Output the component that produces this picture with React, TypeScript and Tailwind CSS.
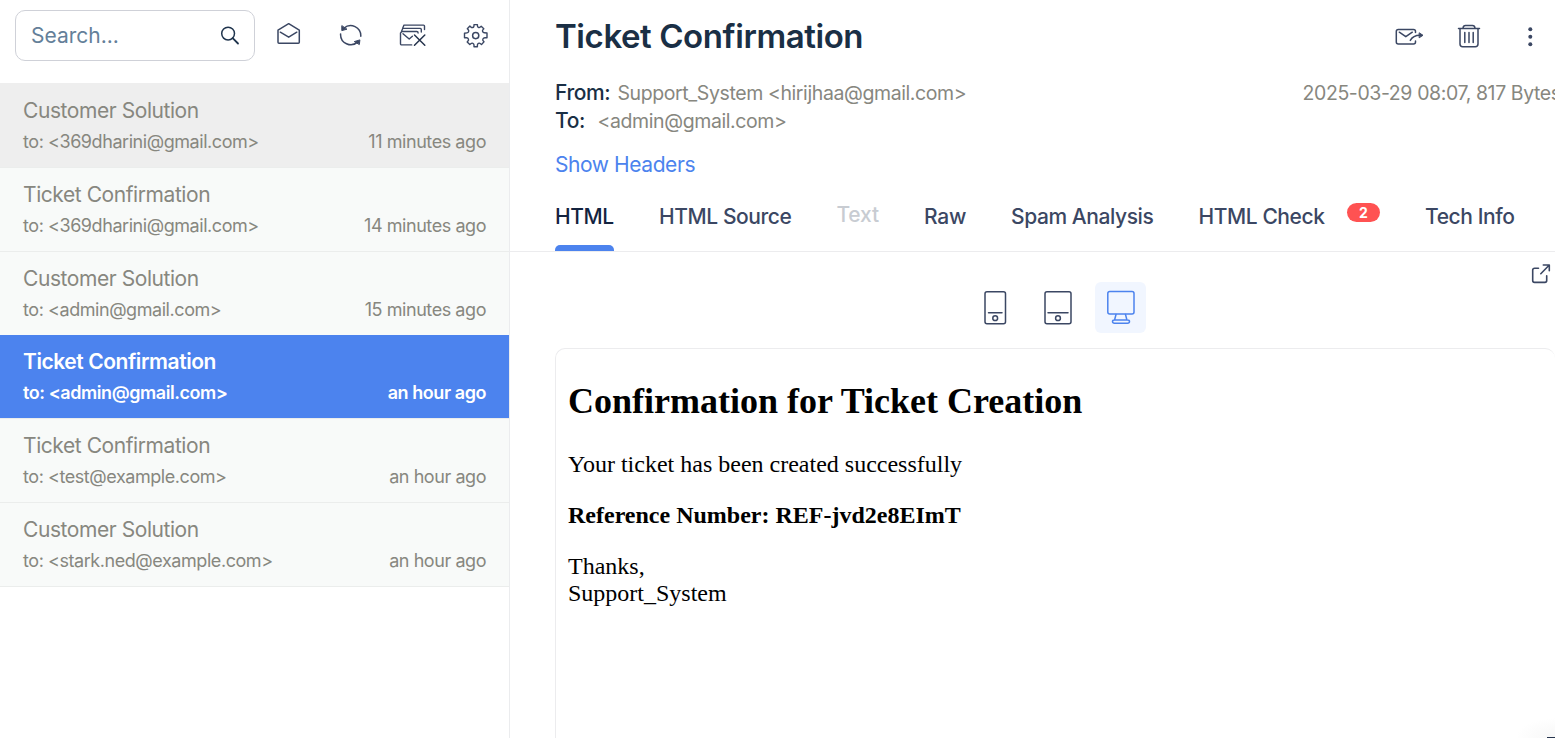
import React from "react";

type Mail = { subject: string; to: string; time: string; tone: "hover" | "normal" | "active" };

const mails: Mail[] = [
  { subject: "Customer Solution", to: "<369dharini@gmail.com>", time: "11 minutes ago", tone: "hover" },
  { subject: "Ticket Confirmation", to: "<369dharini@gmail.com>", time: "14 minutes ago", tone: "normal" },
  { subject: "Customer Solution", to: "<admin@gmail.com>", time: "15 minutes ago", tone: "normal" },
  { subject: "Ticket Confirmation", to: "<admin@gmail.com>", time: "an hour ago", tone: "active" },
  { subject: "Ticket Confirmation", to: "<test@example.com>", time: "an hour ago", tone: "normal" },
  { subject: "Customer Solution", to: "<stark.ned@example.com>", time: "an hour ago", tone: "normal" },
];

const tones = {
  hover: "bg-[#eeeeee] border-[#eeeeee] text-[#87877f] pt-[11px]",
  normal: "bg-[#f8faf9] border-[#ebedec] text-[#87877f] pt-[11px]",
  active: "bg-[#4c83ee] border-[#4c83ee] text-white font-semibold pt-[10px]",
};

function Icon({ w, h, className = "", children }: { w: number; h: number; className?: string; children: React.ReactNode }) {
  return (
    <svg width={w} height={h} viewBox={`0 0 ${w} ${h}`} fill="none" stroke="currentColor" strokeWidth="1.5" strokeLinecap="round" strokeLinejoin="round" className={`shrink-0 ${className}`}>
      {children}
    </svg>
  );
}

function Toolbar() {
  return (
    <div className="flex h-[83.25px] shrink-0 items-start pl-[15px] pt-[10px] text-[#3b4763]">
      <div className="flex h-[51px] w-[240px] items-center justify-between rounded-[10px] border border-[#cfd1d8] pl-[15px] pr-[14px]">
        <span className="text-[21px] leading-[30px] text-[#647f99]">Search...</span>
        <Icon w={20} h={20} className="text-[#1f344d]">
          <circle cx="8.1" cy="7.6" r="6.4" />
          <path d="M12.7 12.2 18 17.5" strokeWidth="1.8" />
        </Icon>
      </div>
      <Icon w={24} h={24} className="ml-[22px] mt-[12px]">
        <path d="M1 8.2 11.7 1.7 22.3 8.2V20.3q0 1-1 1H2q-1 0-1-1z" />
        <path d="M3.3 10.2 11.7 15.2l8.1-5" />
      </Icon>
      <Icon w={24} h={24} className="ml-[38px] mt-[12.5px]">
        <path d="M5 5.1A10.2 10.2 0 0 1 21.8 13.2M18.8 18.9A10.2 10.2 0 0 1 1.6 10.9" />
        <path d="M2.8 3 2.8 7.6 7.6 6.3z M20.4 21.2 20.9 16.9 15.6 18.5z" fill="currentColor" strokeWidth="1" />
      </Icon>
      <Icon w={28} h={24} className="ml-[36px] mt-[12.5px]">
        <g strokeWidth="1.4">
          <path d="M3.7 5.2 5 2.1H24.5q1 0 1 1V6.5" />
          <path d="M2.5 8.4 3.7 5.4H21.3q1 0 1 1V9" />
          <path d="M12.7 21.9H2.7q-1.2 0-1.2-1.2V9.9L3 8.5H17.8q1.3 0 1.3 1.6" />
          <path d="M4 10.7 10.2 16 13.4 13.2" />
        </g>
        <path d="M15.5 12 25.8 22.2M25.8 12 15.5 22.2" stroke="#26344d" />
      </Icon>
      <Icon w={26} h={26} className="ml-[36px] mt-[12.5px]">
        <path d="M10.3 4.4Q11 3.8 11 2.5V1.6H14.4V2.5Q14.4 3.8 15.3 4.3 16.4 4.8 17.3 4L18.2 3.2 20.8 5.7 20 6.6Q19.2 7.6 19.6 8.6 20.1 9.8 21.3 9.8L24 10V14.7H21.9Q20.5 14.8 19.9 16 19.4 17.2 20.3 18.1L21 18.8 18.5 21.6 17.5 20.7Q16.5 19.8 15.4 20.3 14.4 20.8 14.4 22V23.7H11V22Q11 20.8 9.9 20.3 8.8 19.8 7.8 20.7L6.8 21.6 4.2 18.9 5 18Q5.9 17 5.4 16 5 14.7 3.6 14.7H1.5V10.2L4 9.9Q5.2 9.8 5.6 8.6 6 7.5 5.1 6.5L4.3 5.7 6.9 3.1 7.8 3.9Q8.9 4.9 10.3 4.4Z" strokeWidth="1.4" />
        <circle cx="12.7" cy="12.6" r="3.1" />
      </Icon>
    </div>
  );
}

function MailRow({ mail }: { mail: Mail }) {
  return (
    <div className={`h-[83.75px] shrink-0 border-t px-[23px] ${tones[mail.tone]}`}>
      <div className="text-[21px] leading-[31px] tracking-[-0.43px]">{mail.subject}</div>
      <div className="flex justify-between text-[18px] leading-[31px] tracking-[-0.44px]">
        <span>to: {mail.to}</span>
        <span>{mail.time}</span>
      </div>
    </div>
  );
}

function Tabs() {
  return (
    <nav className="flex h-[60px] shrink-0 items-stretch border-b border-[#ececee] pl-[45px] text-[21px] font-medium leading-[50px] tracking-[-0.42px] text-[#3b4763]">
      <div className="flex w-[59px] flex-col justify-between text-[#13233f]">
        <span>HTML</span>
        <span className="h-[6px] rounded-t-[5px] bg-[#4c83ee]" />
      </div>
      <span className="ml-[45px] w-[177.5px]">HTML Source</span>
      <span className="w-[87.5px] leading-[46px] tracking-[-0.2px] text-[#c8ccd2]">Text</span>
      <span className="w-[87px] tracking-[-0.2px]">Raw</span>
      <span className="w-[187.5px]">Spam Analysis</span>
      <span className="w-[148.5px]">HTML Check</span>
      <span className="mt-[11px] flex h-[19px] w-[33px] items-center justify-center rounded-full bg-[#ff5252] text-[14px] font-bold leading-[19px] tracking-normal text-white">2</span>
      <span className="ml-[45px] whitespace-nowrap">Tech Info</span>
    </nav>
  );
}

function Header() {
  return (
    <header className="flex h-[192px] shrink-0 flex-col pl-[45px]">
      <div className="flex h-[73px] items-center justify-between text-[#3b4763]">
        <h1 className="-mt-[2px] text-[33px] font-semibold leading-[48px] tracking-[-0.42px] text-[#1a2f45]">Ticket Confirmation</h1>
        <div className="flex items-center pr-[20px]">
          <Icon w={30} h={22}>
            <path d="M20.5 6.5V5.5q0-2-2-2H3.3q-2 0-2 2V16q0 2 2 2H18.5q2 0 2-2V15" />
            <path d="M4.3 6.2 10.8 10.7 17.3 6.2" />
            <path d="M15.3 14.4Q18 9.3 25 9.3" />
            <path d="M24.5 7 28 9.3 24.5 11.6z" fill="currentColor" strokeWidth="1" />
          </Icon>
          <Icon w={24} h={26} className="-mt-[1px] ml-[32px]">
            <path d="M1.5 5.5H22.5M6 5Q6.3 2.5 8.5 2.5h7Q17.7 2.5 18 5M3 6V21q0 2.7 2.7 2.7H18.3Q21 23.7 21 21V6" />
            <path d="M7.8 9.5V19.5M12 9.5V19.5M16.2 9.5V19.5" />
          </Icon>
          <Icon w={10} h={22} className="-mt-[1px] ml-[44px]">
            <g fill="currentColor" stroke="none">
              <circle cx="5.3" cy="4.2" r="2" />
              <circle cx="5.3" cy="11.7" r="2" />
              <circle cx="5.3" cy="19.2" r="2" />
            </g>
          </Icon>
        </div>
      </div>
      <div className="flex items-start justify-between pt-[6px] text-[19.5px] leading-[28px] tracking-[-0.4px] text-[#87877f]">
        <div>
          <div className="flex">
            <b className="w-[62.5px] text-[21px] font-medium text-[#1a2f45]">From:</b>
            <span>Support_System &lt;hirijhaa@gmail.com&gt;</span>
          </div>
          <div className="flex">
            <b className="w-[42.5px] text-[21px] font-medium text-[#1a2f45]">To:</b>
            <span>&lt;admin@gmail.com&gt;</span>
          </div>
        </div>
        <div className="w-[252.5px] whitespace-nowrap">2025-03-29 08:07, 817 Bytes</div>
      </div>
      <a className="mt-[14px] text-[21px] leading-[32px] tracking-[-0.42px] text-[#4c83ee]">Show Headers</a>
    </header>
  );
}

function DeviceBar() {
  return (
    <div className="flex h-[95px] shrink-0 justify-end text-[#3b4763]">
      <div className="mt-[30px] flex h-[51px] items-center">
        <Icon w={24} h={36}>
          <rect x="2" y="1.8" width="20.5" height="32" rx="2" />
          <path d="M5.5 22.8H19" />
          <circle cx="12.2" cy="28.2" r="2.4" />
        </Icon>
        <Icon w={30} h={36} className="ml-[36px]">
          <rect x="2" y="1.8" width="26" height="32" rx="2" />
          <path d="M5 22.8H25" />
          <circle cx="15" cy="28.2" r="2.4" />
        </Icon>
        <span className="ml-[22px] flex h-[51px] w-[51px] items-center justify-center rounded-[6px] bg-[#f1f6ff] text-[#4c83ee]">
          <Icon w={30} h={36}>
            <rect x="1.8" y="1.5" width="26.2" height="22.5" rx="2" />
            <path d="M10 24.5 8.7 29.5M19.5 24.5 20.8 29.5M8.5 30H21.5q2 0 2 1.6t-2 1.6h-13q-2 0-2-1.6t2-1.6z" />
          </Icon>
        </span>
      </div>
      <Icon w={22} h={22} className="ml-[384px] mr-[3px] mt-[11px]">
        <path d="M8.5 5.3H4.7Q2.7 5.3 2.7 7.1V17.6Q2.7 19.4 4.5 19.4H14.9Q16.7 19.4 16.7 17.6V12.8" strokeWidth="1.6" />
        <path d="M10.8 10.7 19.3 2M13.3 2H19.3V7.8" strokeWidth="1.6" />
      </Icon>
    </div>
  );
}

export default function App() {
  return (
    <main className="flex h-[738px] w-[1555px] overflow-hidden bg-white font-['Inter',sans-serif]">
      <aside className="flex w-[510px] shrink-0 flex-col border-r border-[#ebecee]">
        <Toolbar />
        {mails.map((mail, i) => (
          <MailRow key={i} mail={mail} />
        ))}
        <div className="border-t border-[#ebedec]" />
      </aside>
      <section className="relative flex w-[1045px] flex-col">
        <Header />
        <Tabs />
        <DeviceBar />
        <div className="ml-[45px] mt-[1px] grow overflow-hidden rounded-t-[10px] border border-b-0 border-r-0 border-[#ececee] pl-[12px] pt-[31px] font-['Liberation_Serif',serif] text-[24px] leading-[27px] text-black">
          <h2 className="text-[36px] font-bold leading-[42px]">Confirmation for Ticket Creation</h2>
          <p className="mt-[29px]">Your ticket has been created successfully</p>
          <p className="mt-[24px] font-bold">Reference Number: REF-jvd2e8EImT</p>
          <p className="mt-[24px]">
            Thanks,
            <br />
            Support_System
          </p>
        </div>
        <div className="absolute bottom-0 right-0 h-[20px] w-[40px] bg-[radial-gradient(ellipse_at_bottom_right,#f7f7f7,#ffffff00_70%)]" />
        <div className="absolute bottom-0 right-0 h-[1px] w-[8px] bg-[#26344d]" />
      </section>
    </main>
  );
}
